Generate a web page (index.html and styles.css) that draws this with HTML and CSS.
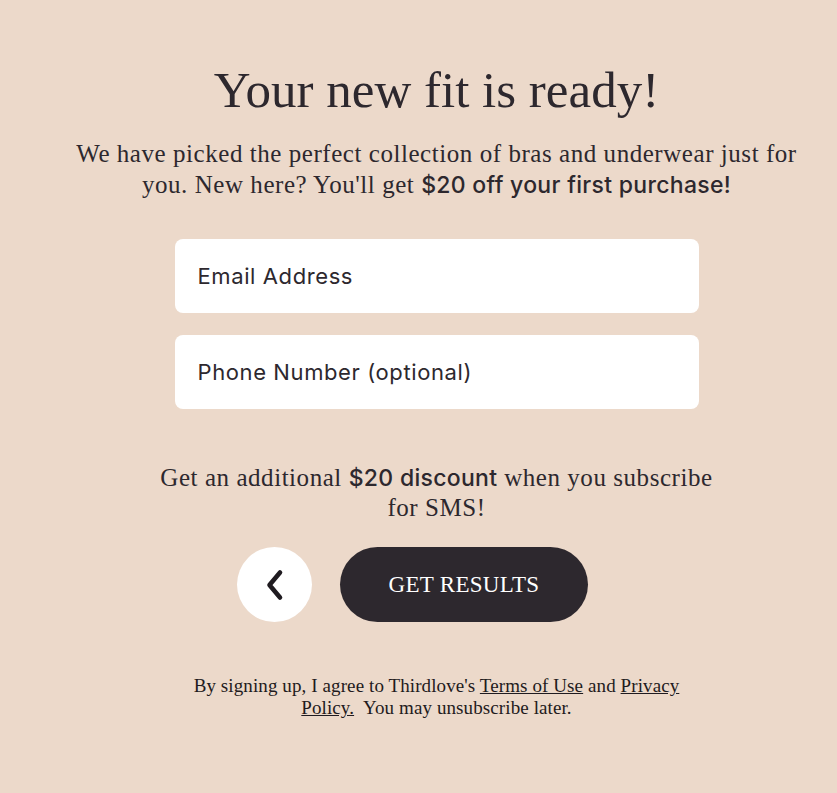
FILE: index.html
```html
<!DOCTYPE html>
<html lang="en">
<head>
<meta charset="utf-8">
<title>Your new fit is ready!</title>
<link rel="stylesheet" href="styles.css">
</head>
<body>
<main class="page">
  <h1 class="title">Your new fit is ready!</h1>
  <p class="intro">We have picked the perfect collection of bras and underwear just for you. New here? You'll get <strong class="sans">$20 off your first purchase!</strong></p>
  <form class="form">
    <input class="field" type="email" placeholder="Email Address">
    <input class="field" type="tel" placeholder="Phone Number (optional)">
  </form>
  <p class="sms">Get an additional <strong class="sans">$20 discount</strong> when you subscribe for SMS!</p>
  <div class="actions">
    <button class="back" type="button" aria-label="Back">
      <svg width="22" height="32" viewBox="0 0 22 32"><path d="M16 3.5 L5.5 16 L16 28.5" fill="none" stroke="#1f1b20" stroke-width="4.6" stroke-linecap="round" stroke-linejoin="round"/></svg>
    </button>
    <button class="submit" type="button">GET RESULTS</button>
  </div>
  <p class="legal">By signing up, I agree to Thirdlove's <a href="#">Terms of Use</a> and <a href="#">Privacy Policy.</a>&nbsp; You may unsubscribe later.</p>
</main>
</body>
</html>
```
FILE: styles.css
```css
html, body {
  margin: 0;
  padding: 0;
  background: #ecd9ca;
}
body {
  color: #2d282e;
  font-family: "Liberation Serif", "Times New Roman", serif;
}
.page {
  padding: 58px 0 40px 36px;
  display: flex;
  flex-direction: column;
  align-items: center;
  text-align: center;
}
.title {
  margin: 0;
  font-weight: 400;
  font-size: 51px;
  line-height: 64px;
}
.intro {
  margin: 16px 0 0;
  max-width: 740px;
  font-size: 25px;
  letter-spacing: 0.55px;
  line-height: 31px;
}
.sans {
  font-family: Inter, "Liberation Sans", sans-serif;
  font-weight: 500;
  font-size: 23px;
  letter-spacing: 0.3px;
}
.form {
  margin-top: 38px;
  display: flex;
  flex-direction: column;
  gap: 22px;
}
.field {
  box-sizing: border-box;
  width: 524px;
  height: 74px;
  border: none;
  border-radius: 8px;
  background: #fff;
  padding: 0 23px;
  font-family: Inter, "Liberation Sans", sans-serif;
  font-size: 22px;
  letter-spacing: 0.6px;
  color: #2d282e;
  outline: none;
}
.field::placeholder {
  color: #2d282e;
  opacity: 1;
}
.sms {
  margin: 54px 0 0;
  max-width: 580px;
  font-size: 25px;
  letter-spacing: 0.55px;
  line-height: 30px;
}
.actions {
  margin-top: 24px;
  padding-right: 48px;
  display: flex;
  gap: 28px;
}
.back {
  width: 75px;
  height: 75px;
  border: none;
  border-radius: 50%;
  background: #fff;
  display: flex;
  align-items: center;
  justify-content: center;
  padding: 0;
}
.submit {
  width: 248px;
  height: 75px;
  border: none;
  border-radius: 38px;
  background: #2d282e;
  color: #fff;
  font-family: "Liberation Serif", "Times New Roman", serif;
  font-size: 23px;
  letter-spacing: 0.3px;
  padding: 0;
}
.legal {
  margin: 53px 0 0;
  max-width: 500px;
  font-size: 19px;
  letter-spacing: 0.1px;
  line-height: 22px;
  color: #1f1b20;
}
.legal a {
  color: inherit;
}
```
